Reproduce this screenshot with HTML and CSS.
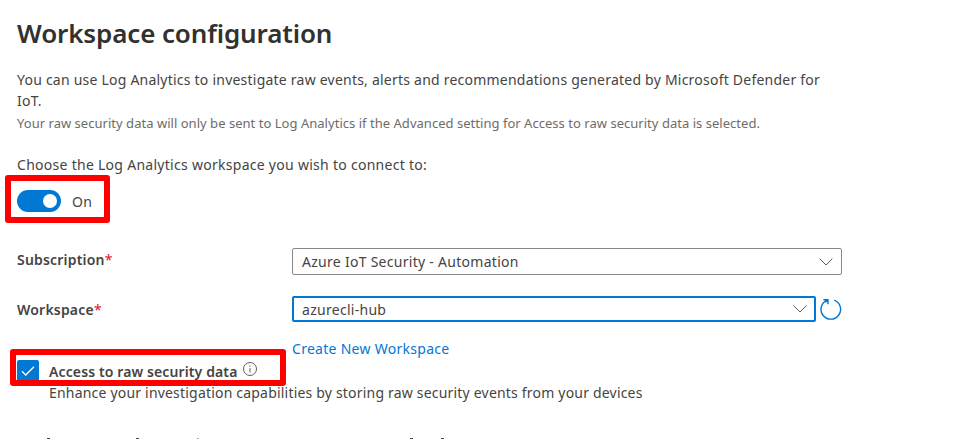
FILE: index.html
```html
<!DOCTYPE html>
<html lang="en">
<head>
<meta charset="utf-8">
<title>Workspace configuration</title>
<link rel="stylesheet" href="styles.css">
</head>
<body>
<main class="page">
  <h1 class="title">Workspace configuration</h1>
  <p class="intro">You can use Log Analytics to investigate raw events, alerts and recommendations generated by Microsoft Defender for<br>IoT.</p>
  <p class="note">Your raw security data will only be sent to Log Analytics if the Advanced setting for Access to raw security data is selected.</p>
  <p class="choose">Choose the Log Analytics workspace you wish to connect to:</p>
  <div class="toggle-row">
    <span class="toggle"><span class="knob"></span></span><span>On</span>
    <span class="mark mark-toggle"></span>
  </div>
  <div class="field field-sub">
    <label class="label label-sub">Subscription<span class="req">*</span></label>
    <div class="select"><span>Azure IoT Security - Automation</span>
      <svg class="chev" viewBox="0 0 14 8"><path d="M.7.7 7 7 13.300.7"/></svg></div>
  </div>
  <div class="field field-ws">
    <label class="label">Workspace<span class="req">*</span></label>
    <div class="select focused"><span>azurecli-hub</span>
      <svg class="chev" viewBox="0 0 14 8"><path d="M.7.7 7 7 13.300.7"/></svg></div>
    <svg class="refresh" viewBox="0 0 22 22"><path d="M14.300 2.200A9.800 9.800 0 1 1 7.300 2.200M3.400 1.700H8V6.200M8 1.700 5.500 4.200"/></svg>
  </div>
  <a class="create">Create New Workspace</a>
  <div class="access">
    <span class="check"><svg viewBox="0 0 22 22"><path d="M5 11.300 8.700 15 17 6.700"/></svg></span>
    <span class="access-label">Access to raw security data</span>
    <svg class="info" viewBox="0 0 14 14"><circle cx="7" cy="7" r="6.500"/><path d="M7 6V10.500M7 3.500V4.700"/></svg>
    <span class="mark mark-access"></span>
  </div>
  <p class="enhance">Enhance your investigation capabilities by storing raw security events from your devices</p>
  <div class="next"><i></i><i></i><i class="faint"></i><i></i><i></i></div>
</main>
</body>
</html>
```
FILE: styles.css
```css
* { box-sizing: border-box; }
body { margin: 0; background: #fff; color: #454442; font: 14px/21px "Noto Sans", "Open Sans", sans-serif; letter-spacing: .28px; overflow: hidden; }
p, h1 { margin: 0; white-space: nowrap; }
.page { height: 439px; overflow: hidden; padding: 15px 0 0 17px; }
.title { color: #323130; font-size: 26px; line-height: 36px; font-weight: 600; letter-spacing: -.13px; }
.intro { margin-top: 18px; letter-spacing: .225px; }
.note { color: #6e6c6a; font-size: 13px; margin-top: 2px; letter-spacing: .028px; }
.choose { margin-top: 20px; }
.toggle-row { position: relative; display: flex; align-items: center; gap: 11px; height: 22px; margin-top: 15px; }
.toggle { width: 44px; height: 22px; border-radius: 11px; background: #0078d4; display: flex; align-items: center; justify-content: flex-end; padding-right: 4px; }
.knob { width: 14px; height: 14px; border-radius: 50%; background: #fff; }
.mark { position: absolute; border: 6px solid #f00; border-radius: 3px; }
.mark-toggle { left: -12px; top: -15px; width: 105px; height: 48px; }
.field { display: flex; align-items: center; height: 27px; }
.field-sub { margin-top: 36px; }
.field-ws { margin-top: 20px; }
.label { width: 275px; font-weight: 600; letter-spacing: .2px; }
.label-sub { padding-bottom: 4px; }
.field-ws .label { padding-top: 1px; }
.req { color: #e81123; font-weight: 400; }
.select { width: 550px; height: 27px; border: 1px solid #8a8886; border-radius: 2px; padding: 0 8px 0 9px; display: flex; align-items: center; justify-content: space-between; }
.focused { width: 524px; height: 26px; border: 2px solid #0078d4; padding: 1px 7px 0 8px; }
.chev { width: 14px; height: 8px; fill: none; stroke: #605e5c; }
.refresh { width: 22px; height: 22px; margin-left: 4px; fill: none; stroke: #0078d4; stroke-width: 1.4; }
.create { display: block; margin: 16px 0 0 275px; color: #0078d4; }
.access { position: relative; display: flex; height: 22px; margin-top: 1px; }
.check { width: 22px; height: 22px; background: #0078d4; border-radius: 2px; }
.check svg { display: block; fill: none; stroke: #fff; stroke-width: 1.3; }
.access-label { margin-left: 10px; font-weight: 600; line-height: 24px; letter-spacing: .12px; }
.info { width: 14px; height: 14px; margin: 2px 0 0 6px; fill: none; stroke: #605e5c; }
.mark-access { left: -7px; top: -11px; width: 276px; height: 37px; }
.enhance { margin-left: 32px; letter-spacing: .195px; }
.next { display: grid; grid-template-columns: 89px 61px 213px 31px 3px; margin: 35px 0 0 30px; }
.next i { width: 3px; height: 1px; background: #4a4948; }
.next .faint { width: 2px; background: #aaa; }
```
